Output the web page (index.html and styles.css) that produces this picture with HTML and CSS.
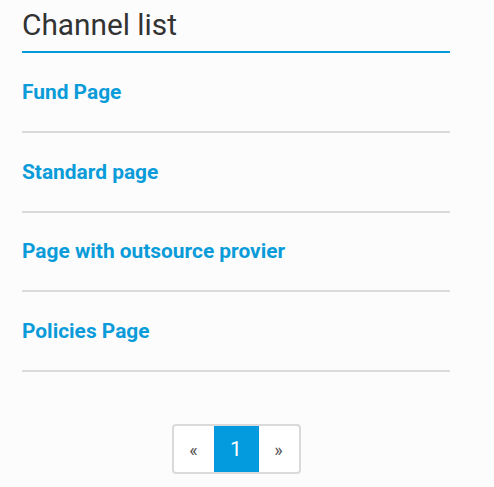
FILE: index.html
```html
<!DOCTYPE html>
<html>
<head>
<meta charset="utf-8">
<link rel="stylesheet" href="styles.css">
</head>
<body>
<div class="wrap">
  <h1 class="title">Channel list</h1>
  <ul class="list">
    <li class="item"><a href="#">Fund Page</a></li>
    <li class="item"><a href="#">Standard page</a></li>
    <li class="item"><a href="#">Page with outsource provier</a></li>
    <li class="item"><a href="#">Policies Page</a></li>
  </ul>
  <nav class="pager-row">
    <div class="pager">
      <a class="pg" href="#">«</a>
      <a class="pg active" href="#">1</a>
      <a class="pg" href="#">»</a>
    </div>
  </nav>
</div>
</body>
</html>
```

FILE: styles.css
```css
html, body {
  margin: 0;
  padding: 0;
  background: #fcfcfc;
  font-family: Roboto, "Liberation Sans", sans-serif;
}
.wrap {
  width: 428px;
  margin-left: 22px;
}
.title {
  margin: 0;
  padding-top: 7px;
  height: 44px;
  font-size: 29.8px;
  font-weight: 400;
  line-height: 36px;
  color: #333;
  border-bottom: 2px solid #039bd9;
}
.list {
  list-style: none;
  margin: 0;
  padding: 0;
}
.item {
  height: 77.8px;
  display: flex;
  align-items: center;
  border-bottom: 2px solid #dadada;
}
.item a {
  color: #0a9bd9;
  font-weight: 700;
  font-size: 20.9px;
  text-decoration: none;
}
.pager-row {
  display: flex;
  justify-content: center;
  padding-top: 52px;
}
.pager {
  display: flex;
  border: 2px solid #dadada;
  border-radius: 4px;
  overflow: hidden;
  background: #fff;
  height: 46px;
}
.pg {
  display: flex;
  align-items: center;
  justify-content: center;
  width: 40px;
  color: #555;
  font-size: 18px;
  text-decoration: none;
}
.pg.active {
  width: 45px;
  background: #039bdd;
  color: #fff;
  font-size: 21px;
}
```
